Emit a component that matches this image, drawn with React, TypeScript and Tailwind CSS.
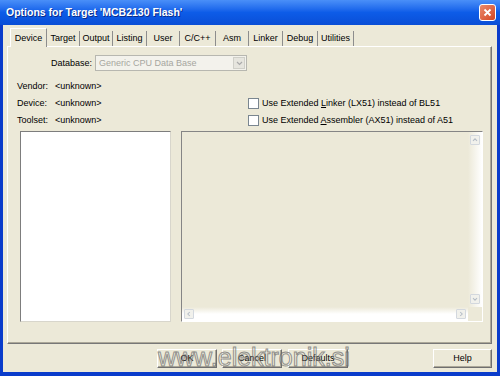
import React from "react";

const tabs: { label: string; w: string }[] = [
  { label: "Device", w: "w-[37px]" },
  { label: "Target", w: "w-[33px]" },
  { label: "Output", w: "w-[33px]" },
  { label: "Listing", w: "w-[34px]" },
  { label: "User", w: "w-[33px]" },
  { label: "C/C++", w: "w-[36px]" },
  { label: "Asm", w: "w-[33px]" },
  { label: "Linker", w: "w-[34px]" },
  { label: "Debug", w: "w-[35px]" },
  { label: "Utilities", w: "w-[36px]" },
];

function Arrow({ dir }: { dir: "up" | "down" | "left" | "right" }) {
  const d = {
    up: "M2.5 6 L5 3.5 L7.5 6",
    down: "M2.5 4 L5 6.5 L7.5 4",
    left: "M6 2.5 L3.5 5 L6 7.5",
    right: "M4 2.5 L6.5 5 L4 7.5",
  }[dir];
  return (
    <div className="h-[10px] w-[10px] rounded-[1px] border border-[#d3d8de] bg-[#f1f1ec]">
      <svg width="8" height="8" viewBox="0 0 10 10">
        <path d={d} fill="none" stroke="#b4bcc6" strokeWidth="1.3" />
      </svg>
    </div>
  );
}

function Checkbox({ children }: { children: React.ReactNode }) {
  return (
    <div className="flex items-center gap-[3px]">
      <span className="h-[11px] w-[11px] border border-[#7a8690] bg-white" />
      <span>{children}</span>
    </div>
  );
}

function Button({ label, w }: { label: string; w: string }) {
  return (
    <button
      type="button"
      className={`${w} h-[19px] border border-t-white border-l-white border-r-[#6f6f6f] border-b-[#6f6f6f] bg-[#ece9d8] text-[9px] shadow-[inset_-1px_-1px_0_#aca899]`}
    >
      {label}
    </button>
  );
}

export default function App() {
  return (
    <div className="relative flex h-[376px] w-[500px] flex-col overflow-hidden bg-[#0b3fcf] font-['Liberation_Sans',Arial,sans-serif] text-[9px] leading-none text-black">
      {/* title bar */}
      <div className="flex h-[25px] items-center justify-between bg-linear-to-b from-[#4a8ff8] via-[#0d5ce8] to-[#0a4ed6] pl-[6px] pr-[4px]">
        <span className="text-[10.5px] font-bold text-white [text-shadow:1px_1px_0_#0a2c8a]">
          Options for Target 'MCB2130 Flash'
        </span>
        <div className="flex h-[17px] w-[17px] items-center justify-center rounded-[3px] border border-white bg-linear-to-br from-[#e98a6c] to-[#d4431d]">
          <svg width="9" height="9" viewBox="0 0 9 9">
            <path d="M1.5 1.5 L7.5 7.5 M7.5 1.5 L1.5 7.5" stroke="white" strokeWidth="1.8" />
          </svg>
        </div>
      </div>

      {/* dialog body */}
      <div className="flex flex-1 flex-col border-x-[3px] border-b-[4px] border-[#0a3ccb] bg-[#ece9d8]">
        {/* tabs */}
        <div className="relative z-10 flex h-[21px] items-end pl-[7px] pt-[3px]">
          {tabs.map((t, i) =>
            i === 0 ? (
              <div
                key={t.label}
                className={`${t.w} -mb-px flex h-[19px] items-center justify-center border-l border-t border-r border-l-white border-t-white border-r-[#8d8d8d] bg-[#ece9d8]`}
              >
                {t.label}
              </div>
            ) : (
              <div
                key={t.label}
                className={`${t.w} flex h-[15px] items-center justify-center border-r border-[#8d8d8d]`}
              >
                {t.label}
              </div>
            ),
          )}
        </div>

        {/* tab panel */}
        <div className="ml-[4px] flex h-[298px] w-[485px] flex-col border border-t-white border-l-white border-r-[#777] border-b-[#777] pb-[20px] pt-[8px] shadow-[inset_-1px_-1px_0_#aca899]">
          <div className="flex h-[16px] items-center">
            <span className="w-[85px] pr-[1px] text-right">Database:</span>
            <div className="ml-[2px] flex h-[16px] w-[152px] items-center justify-between border border-[#b7b7b0] bg-[#f3f2ec] pl-[3px] pr-[1px]">
              <span className="text-[#a6a6a0]">Generic CPU Data Base</span>
              <div className="flex h-[12px] w-[12px] items-center justify-center border border-[#cfcfc8] bg-[#e6e5de]">
                <svg width="7" height="5" viewBox="0 0 7 5">
                  <path d="M1 1 L3.5 3.5 L6 1" fill="none" stroke="#aaa" strokeWidth="1.2" />
                </svg>
              </div>
            </div>
          </div>

          <div className="mt-[7px] grid grid-cols-[240px_1fr] grid-rows-[17px_17px_17px] items-center">
            <div className="flex pl-[9px]">
              <span className="w-[38px]">Vendor:</span>
              <span>&lt;unknown&gt;</span>
            </div>
            <div />
            <div className="flex pl-[9px]">
              <span className="w-[38px]">Device:</span>
              <span>&lt;unknown&gt;</span>
            </div>
            <Checkbox>
              Use Extended <u>L</u>inker (LX51) instead of BL51
            </Checkbox>
            <div className="flex pl-[9px]">
              <span className="w-[38px]">Toolset:</span>
              <span>&lt;unknown&gt;</span>
            </div>
            <Checkbox>
              Use Extended <u>A</u>ssembler (AX51) instead of A51
            </Checkbox>
          </div>

          <div className="mt-[2px] flex h-[191px] gap-[10px] pl-[12px]">
            <div className="w-[151px] border border-t-[#7d7d7d] border-l-[#7d7d7d] border-r-[#d8d6cc] border-b-[#d8d6cc] bg-white" />
            <div className="flex w-[302px] flex-col border border-t-[#858585] border-l-[#858585] border-r-white border-b-white">
              <div className="flex flex-1">
                <div className="flex-1" />
                <div className="flex w-[14px] flex-col items-center justify-between bg-linear-to-r from-[#ece9d8] to-white py-[3px]">
                  <Arrow dir="up" />
                  <Arrow dir="down" />
                </div>
              </div>
              <div className="flex h-[14px]">
                <div className="flex flex-1 items-center justify-between bg-linear-to-b from-[#ece9d8] via-white to-white px-[2px]">
                  <Arrow dir="left" />
                  <Arrow dir="right" />
                </div>
                <div className="w-[14px]" />
              </div>
            </div>
          </div>
        </div>

        {/* buttons */}
        <div className="mt-[5px] flex pl-[154px] pr-[5px]">
          <Button label="OK" w="w-[60px]" />
          <div className="ml-[5px]">
            <Button label="Cancel" w="w-[60px]" />
          </div>
          <div className="ml-[6px]">
            <Button label="Defaults" w="w-[60px]" />
          </div>
          <div className="ml-auto">
            <Button label="Help" w="w-[59px]" />
          </div>
        </div>
      </div>

      {/* watermark over the buttons */}
      <div className="pointer-events-none absolute left-[158px] top-[345px] text-[25px] leading-none text-white/30 opacity-70 [-webkit-text-stroke:1px_#6a6a6a]">
        www.elektronik.si
      </div>
    </div>
  );
}
